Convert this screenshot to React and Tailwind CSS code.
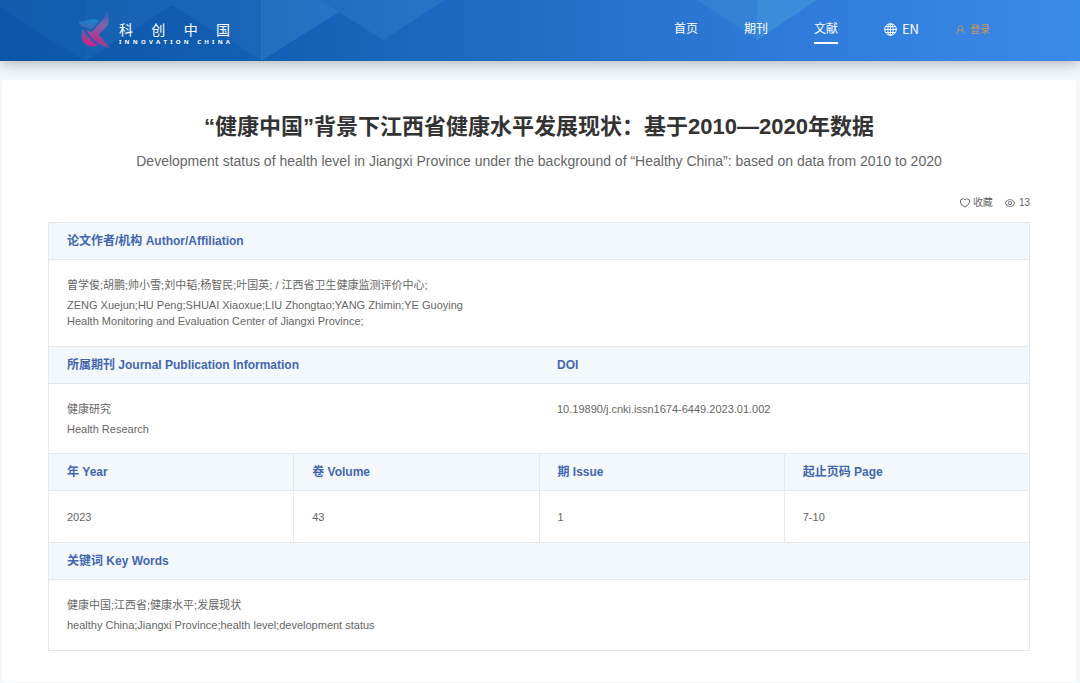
import { AiOutlineEye, AiOutlineHeart, AiOutlineUser } from "react-icons/ai"

const navItems = [
  { label: "首页", href: "#home" },
  { label: "期刊", href: "#journals" },
  { label: "文献", href: "#papers", active: true },
]

// letters of the wordmark are set far apart
function Spread({ text, className }) {
  return (
    <span className={`flex justify-between ${className}`}>
      {text.split("").map((char, i) => (
        <span key={i} className={char === " " ? "w-0.5" : ""}>{char}</span>
      ))}
    </span>
  )
}

function HeaderBackground() {
  return (
    <svg
      className="absolute inset-0 w-full h-full"
      viewBox="0 0 1080 61"
      preserveAspectRatio="none"
      aria-hidden="true"
    >
      <defs>
        <linearGradient id="sky" x1="0" y1="0" x2="1" y2="0">
          <stop offset="0" stopColor="#0b56a8" />
          <stop offset="0.25" stopColor="#135fb5" />
          <stop offset="0.5" stopColor="#226dc6" />
          <stop offset="0.75" stopColor="#2f7cdb" />
          <stop offset="1" stopColor="#3a8ae8" />
        </linearGradient>
      </defs>
      <rect width="1080" height="61" fill="url(#sky)" />
      <g fill="#4fa4dc">
        <path d="M0 0V8L85 61V0Z" opacity="0.08" />
        <path d="M85 0V61L172 5L164 0Z" opacity="0.13" />
        <path d="M164 0L172 5L262 61V0Z" opacity="0.12" />
        <path d="M261 0V61L339 12L320 0Z" opacity="0.25" />
        <path d="M313 0V28L339 12L320 0Z" opacity="0.04" />
        <path d="M320 0L383 40L445 0Z" opacity="0.18" />
        <path d="M383 0V40L445 0Z" opacity="0.04" />
        <path d="M697 0L757 40V0Z" opacity="0.22" />
        <path d="M757 0V40L817 0Z" opacity="0.42" />
      </g>
    </svg>
  )
}

function LogoMark() {
  return (
    <svg className="w-[31px] h-[38px]" viewBox="0 0 31 38" aria-hidden="true">
      <defs>
        <linearGradient id="wing" x1="0" y1="0" x2="0" y2="1">
          <stop offset="0" stopColor="#2f66b4" />
          <stop offset="0.4" stopColor="#7a63ac" />
          <stop offset="0.75" stopColor="#b23591" />
          <stop offset="1" stopColor="#7c489c" />
        </linearGradient>
        <linearGradient id="head" x1="0" y1="0" x2="0" y2="1">
          <stop offset="0" stopColor="#1283cc" />
          <stop offset="1" stopColor="#4b64b2" />
        </linearGradient>
        <linearGradient id="tail" x1="0" y1="0" x2="0" y2="1">
          <stop offset="0" stopColor="#3b6cb6" />
          <stop offset="0.7" stopColor="#c42a8a" />
        </linearGradient>
      </defs>
      <path
        d="M0 11C3 12 6 11 9 10C14 8 19 9 20 11L15 17L12 20L7 17L4 17C2 16 0 14 0 11Z"
        fill="url(#head)"
      />
      <path
        d="M3 19L5 20C8 26 13 32 19 35C14 38 5 36 3 29C2 26 2 22 3 19Z"
        fill="url(#tail)"
      />
      <path
        d="M27 0C30 6 31 12 28 16C26 19 22 21 20 25L31 38C23 37 16 32 11 26L7 20L13 22L18 16C22 11 28 8 27 0Z"
        fill="url(#wing)"
      />
    </svg>
  )
}

function GlobeIcon() {
  return (
    <svg className="w-[13px] h-[13px]" viewBox="0 0 13 13" fill="none" stroke="currentColor" aria-hidden="true">
      <circle cx="6.5" cy="6.5" r="5.8" />
      <ellipse cx="6.5" cy="6.5" rx="2.7" ry="5.8" />
      <path d="M6.5 0.7V12.3M0.7 6.5H12.3M1.6 3.5H11.4M1.6 9.5H11.4" strokeWidth="0.9" />
    </svg>
  )
}

function HeadCell({ children, ...props }) {
  return (
    <th
      scope="col"
      className="h-[37px] px-[18px] bg-[#f3f8fc] border-y border-[#e5e8eb] text-left text-[12px] leading-4 font-bold text-[#4466b0]"
      {...props}
    >
      {children}
    </th>
  )
}

export default function App() {
  return (
    <div className="min-h-screen pb-px bg-[#f3f8fc] font-['Liberation_Sans','Noto_Sans_CJK_SC',sans-serif]">

      {/* HEADER */}
      <header className="relative h-[61px] shadow-[0_2px_14px_rgba(0,0,0,0.3)]">
        <HeaderBackground />
        <div className="relative flex items-center justify-between h-[58px] pl-[79px] pr-[90px] text-white font-['Noto_Sans_CJK_SC',sans-serif]">
          <a href="#home" className="flex items-center gap-[9px]" aria-label="科创中国 Innovation China">
            <LogoMark />
            <span className="block w-[111px] pt-2.5">
              <Spread text="科创中国" className="text-[14px] leading-4" />
              <Spread text="INNOVATION CHINA" className="text-[6px] leading-[10px] font-bold font-['Noto_Sans',sans-serif]" />
            </span>
          </a>

          <nav className="flex items-center">
            <div className="flex gap-[46px]">
              {navItems.map((item) => (
                <a
                  key={item.label}
                  href={item.href}
                  className={`pt-1 pb-1 text-[12px] leading-5 border-b-2 ${
                    item.active ? "border-white" : "border-transparent"
                  }`}
                >
                  {item.label}
                </a>
              ))}
            </div>
            <button className="flex items-center gap-[5px] ml-[46px] text-[13px] leading-4">
              <GlobeIcon />
              EN
            </button>
            <a href="#login" className="flex items-center gap-1 ml-9 text-[10px] leading-5 text-[#c99558]">
              <AiOutlineUser size={11} />
              登录
            </a>
          </nav>
        </div>
      </header>

      {/* PAPER */}
      <main className="mt-[19px] ml-0.5 mr-1 px-[46px] pt-[33px] pb-[31px] rounded bg-white text-[#666]">
        <h1 className="text-center text-[22px] leading-7 font-bold text-[#333]">
          “健康中国”背景下江西省健康水平发展现状：基于2010—2020年数据
        </h1>
        <p className="mt-2.5 text-center text-[14px] leading-5">
          Development status of health level in Jiangxi Province under the background of “Healthy China”: based on data from 2010 to 2020
        </p>

        <div className="flex items-center justify-end gap-[11px] mt-6 mb-[11px] text-[10px] leading-4">
          <button className="flex items-center gap-0.5">
            <AiOutlineHeart size={12} />
            收藏
          </button>
          <span className="flex items-center gap-[3px]">
            <AiOutlineEye size={12} />
            13
          </span>
        </div>

        <table className="w-full table-fixed border-collapse border border-[#e5e8eb] text-[11px] leading-4">
          <tbody>
            <tr>
              <HeadCell colSpan={4}>论文作者/机构 Author/Affiliation</HeadCell>
            </tr>
            <tr>
              <td colSpan={4} className="h-[87px] px-[18px]">
                <p className="mb-1">曾学俊;胡鹏;帅小雪;刘中韬;杨智民;叶国英; / 江西省卫生健康监测评价中心;</p>
                <p>ZENG Xuejun;HU Peng;SHUAI Xiaoxue;LIU Zhongtao;YANG Zhimin;YE Guoying</p>
                <p>Health Monitoring and Evaluation Center of Jiangxi Province;</p>
              </td>
            </tr>
            <tr>
              <HeadCell colSpan={2}>所属期刊 Journal Publication Information</HeadCell>
              <HeadCell colSpan={2}>DOI</HeadCell>
            </tr>
            <tr className="align-top">
              <td colSpan={2} className="h-[70px] px-[18px] pt-[17px]">
                <p className="mb-1">健康研究</p>
                <p>Health Research</p>
              </td>
              <td colSpan={2} className="px-[18px] pt-[17px]">10.19890/j.cnki.issn1674-6449.2023.01.002</td>
            </tr>
            <tr className="divide-x divide-[#e5e8eb]">
              <HeadCell>年 Year</HeadCell>
              <HeadCell>卷 Volume</HeadCell>
              <HeadCell>期 Issue</HeadCell>
              <HeadCell>起止页码 Page</HeadCell>
            </tr>
            <tr className="divide-x divide-[#e5e8eb]">
              <td className="h-[52px] px-[18px]">2023</td>
              <td className="px-[18px]">43</td>
              <td className="px-[18px]">1</td>
              <td className="px-[18px]">7-10</td>
            </tr>
            <tr>
              <HeadCell colSpan={4}>关键词 Key Words</HeadCell>
            </tr>
            <tr>
              <td colSpan={4} className="h-[71px] px-[18px]">
                <p className="mb-1">健康中国;江西省;健康水平;发展现状</p>
                <p>healthy China;Jiangxi Province;health level;development status</p>
              </td>
            </tr>
          </tbody>
        </table>
      </main>

    </div>
  )
}
